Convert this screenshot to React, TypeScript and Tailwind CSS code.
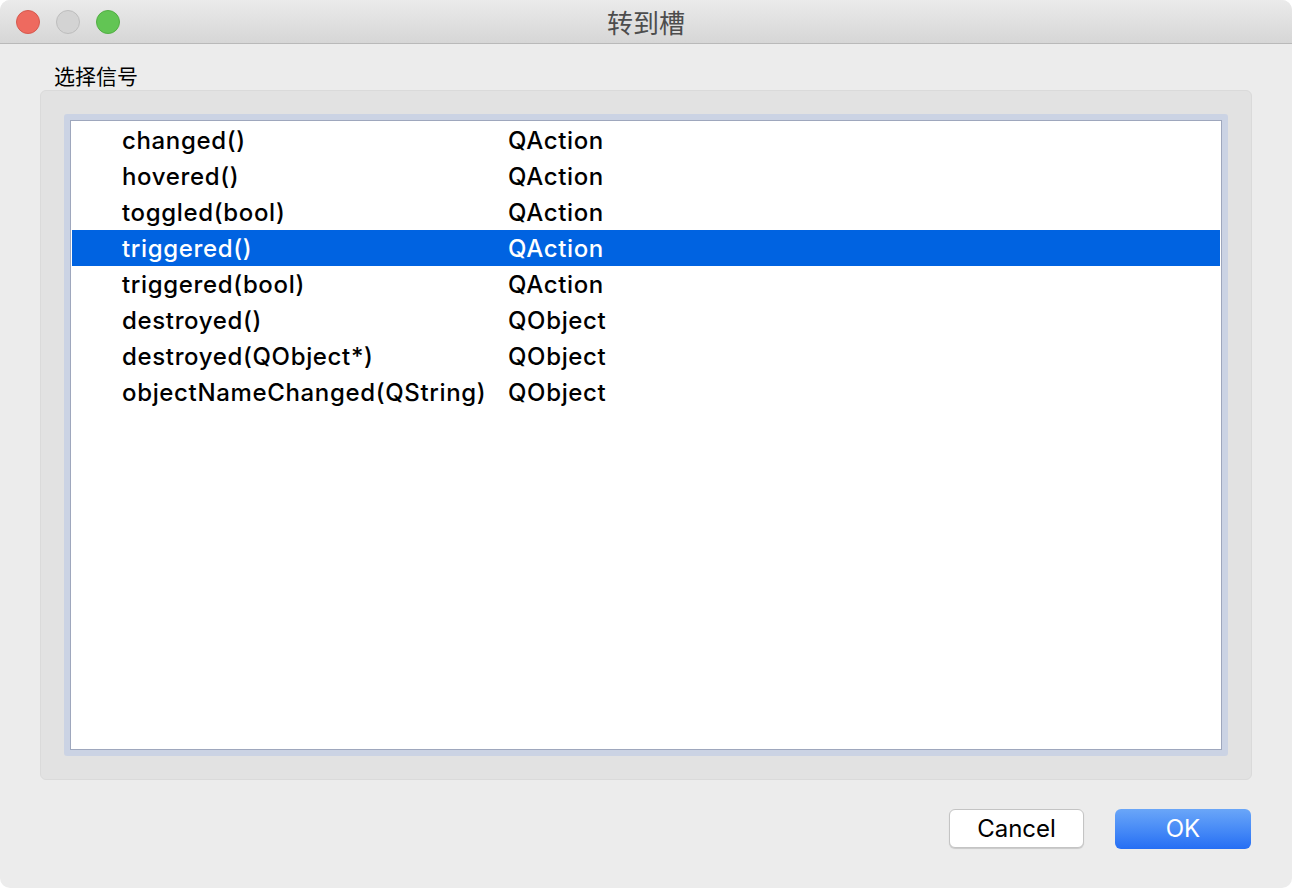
import React from "react";

const rows = [
  ["changed()", "QAction"],
  ["hovered()", "QAction"],
  ["toggled(bool)", "QAction"],
  ["triggered()", "QAction"],
  ["triggered(bool)", "QAction"],
  ["destroyed()", "QObject"],
  ["destroyed(QObject*)", "QObject"],
  ["objectNameChanged(QString)", "QObject"],
];

const font = { fontFamily: 'Inter, "Noto Sans CJK SC", sans-serif' };

export default function App() {
  const selected = 3;

  return (
    <div className="w-[1292px] h-[888px] bg-white" style={font}>
      <div className="w-full h-full rounded-[10px] overflow-hidden bg-[#ececec] flex flex-col">
        {/* title bar */}
        <div className="relative h-[44px] shrink-0 bg-gradient-to-b from-[#ebebeb] to-[#d6d6d6] border-b border-[#b9b9b9] flex items-center justify-center">
          <div className="absolute left-[16px] top-[10px] flex gap-[16px]">
            <span className="w-[24px] h-[24px] rounded-full bg-[#ee6a5f] border border-[#d5594e]" />
            <span className="w-[24px] h-[24px] rounded-full bg-[#d3d3d3] border border-[#bdbdbd]" />
            <span className="w-[24px] h-[24px] rounded-full bg-[#62c554] border border-[#52ae44]" />
          </div>
          <span className="text-[26px] text-[#4d4d4d]" style={{ fontFamily: '"Noto Sans CJK SC", sans-serif' }}>转到槽</span>
        </div>

        {/* body */}
        <div className="flex-1 flex flex-col px-[40px]">
          <div className="pl-[14px] pt-[17px] h-[46px] text-[21px] leading-[28px] text-black" style={{ fontFamily: '"Noto Sans CJK SC", sans-serif' }}>选择信号</div>
          <div className="h-[690px] rounded-[6px] bg-[#e2e2e2] border border-[#dadada] p-[23px]">
            <div className="h-full bg-[#cbd3e4] rounded-[3px] p-[6px]">
              <div className="h-full bg-white border border-[#9ea7bd] pt-[1px] px-[1px]">
                {rows.map(([sig, cls], i) => (
                  <div
                    key={sig}
                    className={`h-[36px] flex items-center pt-[2px] text-[24px] font-medium tracking-[0.65px] ${
                      i === selected ? "bg-[#0063e1] text-white" : "text-black"
                    }`}
                  >
                    <span className="w-[436px] pl-[50px]">{sig}</span>
                    <span>{cls}</span>
                  </div>
                ))}
              </div>
            </div>
          </div>

          {/* buttons */}
          <div className="flex justify-end gap-[31px] pt-[29px] pr-[1px]">
            <button className="w-[135px] h-[39px] rounded-[6px] bg-white border border-[#c4c4c4] shadow-[0_1px_1px_rgba(0,0,0,0.15)] text-[24px] text-black">
              Cancel
            </button>
            <button className="w-[136px] h-[40px] rounded-[6px] bg-gradient-to-b from-[#6aa6f8] to-[#256ef4] text-[24px] text-white">
              OK
            </button>
          </div>
        </div>
      </div>
    </div>
  );
}
